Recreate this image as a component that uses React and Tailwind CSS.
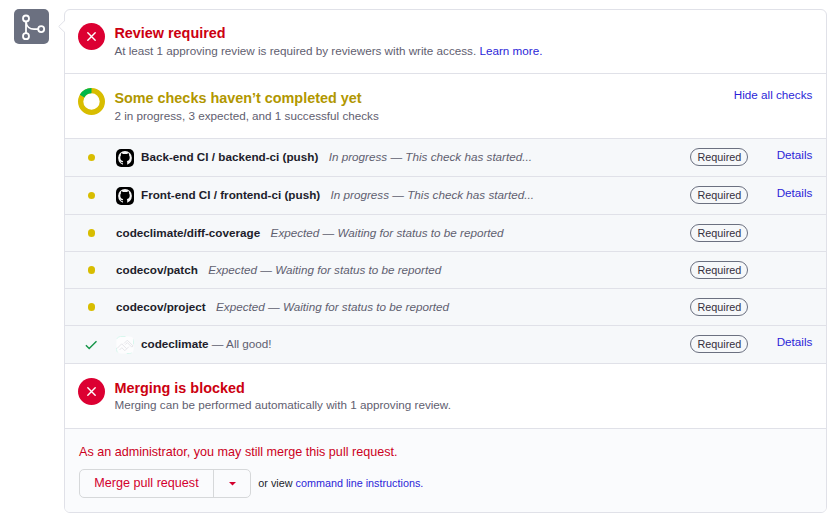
import React from 'react';

const pending = [
  { name: 'Back-end CI / backend-ci (push)', note: 'In progress — This check has started...', avatar: 'github', details: true },
  { name: 'Front-end CI / frontend-ci (push)', note: 'In progress — This check has started...', avatar: 'github', details: true },
  { name: 'codeclimate/diff-coverage', note: 'Expected — Waiting for status to be reported' },
  { name: 'codecov/patch', note: 'Expected — Waiting for status to be reported' },
  { name: 'codecov/project', note: 'Expected — Waiting for status to be reported' },
  { name: 'codeclimate', note: '— All good!', avatar: 'climate', details: true, done: true },
];

function MergeBadge() {
  return (
    <div className="mt-[9px] ml-3.5 flex h-[35px] w-[35px] shrink-0 rounded-[5px] bg-[#6b7080]">
      <svg width="35" height="35" viewBox="0 0 35 35" fill="none" stroke="#fff" strokeWidth="1.8">
        <circle cx="12" cy="9.500" r="3" />
        <circle cx="12" cy="27.200" r="3" />
        <circle cx="27.200" cy="20.100" r="3" />
        <path d="M12 12.500v11.700M12 13c.5 4.400 4 7.100 8 7.100h4.200" />
      </svg>
    </div>
  );
}

function CrossIcon() {
  return (
    <svg className="shrink-0" width="27" height="27" viewBox="0 0 27 27">
      <circle cx="13.5" cy="13.500" r="13.500" fill="#dc0032" />
      <path d="M9.800 9.800l7.400 7.400M17.200 9.800l-7.400 7.400" stroke="#fff" strokeWidth="1.4" strokeLinecap="round" />
    </svg>
  );
}

function DonutIcon() {
  return (
    <svg className="shrink-0" width="27" height="27" viewBox="0 0 27 27" fill="none" strokeWidth="5.300">
      <circle cx="13.500" cy="13.500" r="10.850" stroke="#d8bd00" />
      <path d="M4.100 8.075A10.850 10.850 0 0 1 13.500 2.650" stroke="#00b84a" />
    </svg>
  );
}

function GithubAvatar() {
  return (
    <svg className="mr-[7px] shrink-0" width="18" height="18" viewBox="0 0 18 18">
      <rect width="18" height="18" rx="5" fill="#000" />
      <circle cx="9" cy="9" r="6.900" fill="#f4f4f4" />
      <path
        d="M6.900 16.300v-2.200c-1.700.2-2.100-.8-2.700-1.600 1.200.2 1.500 1 2.700.8 0-.5.1-.9.300-1.200-1.900-.4-2.900-1.500-2.900-3.600 0-.9.200-1.700.7-2.200-.2-.8-.1-1.500.1-2.100.9 0 1.500.5 2 .9 1.200-.3 2.600-.3 3.800 0 .5-.4 1.200-.9 2-.9.2.6.3 1.300.1 2.100.5.600.7 1.300.7 2.200 0 2.100-1 3.200-2.900 3.600.3.300.4.700.4 1.200v3z"
        fill="#000"
      />
    </svg>
  );
}

function ClimateAvatar() {
  return (
    <svg className="mr-[7px] shrink-0" width="18" height="18" viewBox="0 0 18 18" fill="none">
      <rect x=".5" y=".5" width="17" height="17" rx="4" fill="#fdfdfe" stroke="#d9f7ee" strokeDasharray="5 9" />
      <path d="M1 12.500l4.700-4.700 5 5M8 7.500l3.300-3.300 5.700 5.700-1.200 1.200-4.500-4.500-2 2M3.500 14l2.300-2.300 3 3 4-4" stroke="#e6e6ea" />
    </svg>
  );
}

function CheckRow({ row }) {
  return (
    <div className={`flex items-center border-b border-[#e0e1e8] bg-[#f6f8fa] pr-[13.6px] ${row.avatar ? 'h-[38px]' : 'h-[37px]'}`}>
      <div className="flex w-[51px] justify-center pr-px pl-[3px]">
        {row.done ? (
          <svg className="-ml-px" width="14" height="12" viewBox="0 0 14 12" fill="none">
            <path d="M1.900 6.300l3.300 3.300 7.300-7.300" stroke="#149447" strokeWidth="1.400" />
          </svg>
        ) : (
          <span className="h-[7.5px] w-[7.5px] rounded-full bg-[#d8bd00]" />
        )}
      </div>
      {row.avatar === 'github' && <GithubAvatar />}
      {row.avatar === 'climate' && <ClimateAvatar />}
      <div className={`flex-1 text-[11.7px] leading-4 whitespace-nowrap text-[#5f6070] ${row.avatar ? 'mb-0.5' : ''}`}>
        <strong className="font-bold text-[#211d2b]">{row.name}</strong>
        {row.done ? <span> {row.note}</span> : <em className="ml-[10.4px]">{row.note}</em>}
      </div>
      <span
        className={`flex h-[18px] w-[58px] items-center justify-center rounded-full border border-[#6b7080] text-[10.8px] leading-4 text-[#352f3d] ${row.avatar ? 'mb-0.5' : ''}`}
      >
        Required
      </span>
      <div className="flex w-16 justify-end">
        {row.details && <a className="mb-1.5 text-[11.7px] leading-4 text-[#2c1fd8]">Details</a>}
      </div>
    </div>
  );
}

function Section({ icon, title, titleClass, children, className }) {
  return (
    <section className={`flex border-b border-[#e0e1e8] px-[13px] ${className}`}>
      {icon}
      <div className="ml-[9.4px] flex-1">
        <h3 className={`text-[14.4px] leading-5 font-bold ${titleClass}`}>{title}</h3>
        {children}
      </div>
    </section>
  );
}

export default function App() {
  return (
    <div className="flex h-[517px] w-[837px] overflow-hidden bg-white font-['Liberation_Sans',Arial,sans-serif]">
      <MergeBadge />
      <main className="relative mt-[9px] ml-[15px] h-[504px] w-[763px] rounded-[6px] border border-[#e0e1e8]">
        <svg className="absolute top-[9px] -left-[7px]" width="8" height="15" viewBox="0 0 8 15">
          <path d="M8 .5L1 7.500l7 7z" fill="#fff" />
          <path d="M7 1.300L.7 7.500 7 13.700" fill="none" stroke="#e0e1e8" />
        </svg>

        <Section className="h-16 pt-[13px]" icon={<CrossIcon />} title="Review required" titleClass="text-[#cc0011]">
          <p className="text-[11.7px] leading-4 text-[#5f6070]">
            At least 1 approving review is required by reviewers with write access. <a className="text-[#2c1fd8]">Learn more.</a>
          </p>
        </Section>

        <Section className="h-[65px] pt-3.5" icon={<DonutIcon />} title="Some checks haven’t completed yet" titleClass="text-[#b19700]">
          <div className="flex justify-between">
            <p className="text-[11.7px] leading-4 text-[#5f6070]">2 in progress, 3 expected, and 1 successful checks</p>
            <a className="-mt-[21px] mr-[.6px] text-[11.7px] leading-4 text-[#2c1fd8]">Hide all checks</a>
          </div>
        </Section>

        {pending.map((row) => (
          <CheckRow key={row.name} row={row} />
        ))}

        <Section className="h-[65px] pt-3.5" icon={<CrossIcon />} title="Merging is blocked" titleClass="text-[#cc0011]">
          <p className="text-[11.7px] leading-[14px] text-[#5f6070]">Merging can be performed automatically with 1 approving review.</p>
        </Section>

        <footer className="h-[83px] rounded-b-[5px] bg-[#fafbfd] px-3.5 pt-3.5">
          <p className="text-[12.6px] leading-[18px] text-[#cc0022]">As an administrator, you may still merge this pull request.</p>
          <div className="mt-2 flex items-center">
            <div className="flex h-[29px] w-[172px] rounded-[5px] border border-[#d6d8da] text-[#d3002e]">
              <button className="w-[133px] pb-0.5 text-[12.6px] leading-[18px]">Merge pull request</button>
              <button className="flex flex-1 items-center justify-center border-l border-[#d6d8da]" aria-label="Merge options">
                <svg width="7" height="4" viewBox="0 0 7 4">
                  <path d="M0 0h7L3.500 3.600z" fill="currentColor" />
                </svg>
              </button>
            </div>
            <p className="mb-0.5 ml-[7.3px] text-[10.8px] leading-4 text-[#211d2b]">
              or view <a className="text-[#2c1fd8]">command line instructions.</a>
            </p>
          </div>
        </footer>
      </main>
    </div>
  );
}
